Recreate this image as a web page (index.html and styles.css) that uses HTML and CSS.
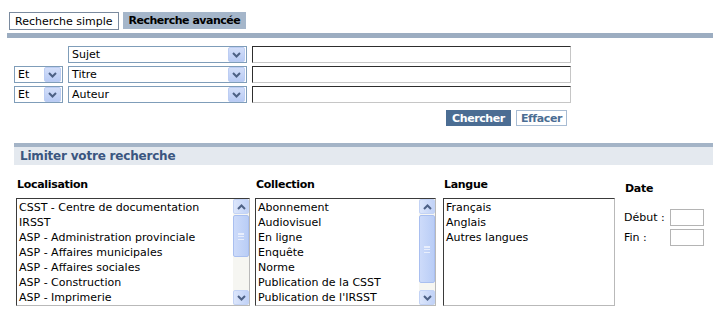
FILE: index.html
```html
<!DOCTYPE html>
<html lang="fr">
<head>
    <meta charset="UTF-8">
    <title>Recherche avancée</title>
    <link rel="stylesheet" href="styles.css">
</head>
<body>
    <div class="tabs">
        <span class="tab">Recherche simple</span>
        <span class="tab active">Recherche avancée</span>
    </div>
    <div class="bar"></div>

    <div class="criteria">
        <div></div>
        <div class="select wide"><span>Sujet</span><i class="arrow"><svg width="9" height="6" viewBox="0 0 9 6"><path d="M1 1 L4.5 4.5 L8 1" fill="none" stroke="#4d6185" stroke-width="2"/></svg></i></div>
        <div class="text-input"></div>

        <div class="select"><span>Et</span><i class="arrow"><svg width="9" height="6" viewBox="0 0 9 6"><path d="M1 1 L4.5 4.5 L8 1" fill="none" stroke="#4d6185" stroke-width="2"/></svg></i></div>
        <div class="select wide"><span>Titre</span><i class="arrow"><svg width="9" height="6" viewBox="0 0 9 6"><path d="M1 1 L4.5 4.5 L8 1" fill="none" stroke="#4d6185" stroke-width="2"/></svg></i></div>
        <div class="text-input"></div>

        <div class="select"><span>Et</span><i class="arrow"><svg width="9" height="6" viewBox="0 0 9 6"><path d="M1 1 L4.5 4.5 L8 1" fill="none" stroke="#4d6185" stroke-width="2"/></svg></i></div>
        <div class="select wide"><span>Auteur</span><i class="arrow"><svg width="9" height="6" viewBox="0 0 9 6"><path d="M1 1 L4.5 4.5 L8 1" fill="none" stroke="#4d6185" stroke-width="2"/></svg></i></div>
        <div class="text-input"></div>
    </div>

    <div class="actions">
        <span class="btn primary">Chercher</span>
        <span class="btn">Effacer</span>
    </div>

    <div class="limit">Limiter votre recherche</div>

    <div class="filters">
        <div class="col col-loc">
            <div class="label">Localisation</div>
            <div class="listbox">
                <ul>
                    <li>CSST - Centre de documentation</li>
                    <li>IRSST</li>
                    <li>ASP - Administration provinciale</li>
                    <li>ASP - Affaires municipales</li>
                    <li>ASP - Affaires sociales</li>
                    <li>ASP - Construction</li>
                    <li>ASP - Imprimerie</li>
                </ul>
                <div class="scroll">
                    <i class="sbtn"><svg width="9" height="6" viewBox="0 0 9 6"><path d="M1 5 L4.5 1.5 L8 5" fill="none" stroke="#4d6185" stroke-width="2"/></svg></i>
                    <div class="track"><div class="thumb short"><b></b></div></div>
                    <i class="sbtn"><svg width="9" height="6" viewBox="0 0 9 6"><path d="M1 1 L4.5 4.5 L8 1" fill="none" stroke="#4d6185" stroke-width="2"/></svg></i>
                </div>
            </div>
        </div>
        <div class="col col-coll">
            <div class="label">Collection</div>
            <div class="listbox">
                <ul>
                    <li>Abonnement</li>
                    <li>Audiovisuel</li>
                    <li>En ligne</li>
                    <li>Enquête</li>
                    <li>Norme</li>
                    <li>Publication de la CSST</li>
                    <li>Publication de l'IRSST</li>
                </ul>
                <div class="scroll">
                    <i class="sbtn"><svg width="9" height="6" viewBox="0 0 9 6"><path d="M1 5 L4.5 1.5 L8 5" fill="none" stroke="#4d6185" stroke-width="2"/></svg></i>
                    <div class="track"><div class="thumb long"><b></b></div></div>
                    <i class="sbtn"><svg width="9" height="6" viewBox="0 0 9 6"><path d="M1 1 L4.5 4.5 L8 1" fill="none" stroke="#4d6185" stroke-width="2"/></svg></i>
                </div>
            </div>
        </div>
        <div class="col col-lang">
            <div class="label">Langue</div>
            <div class="listbox">
                <ul>
                    <li>Français</li>
                    <li>Anglais</li>
                    <li>Autres langues</li>
                </ul>
            </div>
        </div>
        <div class="col col-date">
            <div class="label">Date</div>
            <div class="date-row"><span>Début :</span><div class="date-input"></div></div>
            <div class="date-row"><span>Fin :</span><div class="date-input"></div></div>
        </div>
    </div>
</body>
</html>
```

FILE: styles.css
```css
body {
    font-family: "DejaVu Sans", Verdana, sans-serif;
    font-size: 11px;
    margin: 0;
    padding: 0;
    background-color: #fff;
    color: #000;
}
.tabs {
    display: flex;
    gap: 4px;
    padding: 12px 0 0 9px;
    height: 18px;
}
.tab {
    display: flex;
    align-items: center;
    padding: 0 5px;
    height: 16px;
    border: 1px solid #7a8a9e;
}
.tab.active {
    font-weight: bold;
    letter-spacing: -0.5px;
    background-color: #a5b6ca;
    border-color: #a5b6ca;
    height: 15px;
}
.bar {
    height: 5px;
    margin: 3px 0 0 7px;
    background-color: #9cadc1;
}
.criteria {
    display: grid;
    grid-template-columns: 49px 179px 319px;
    grid-auto-rows: 17px;
    column-gap: 5px;
    row-gap: 3px;
    margin: 8px 0 0 14px;
}
.select {
    display: flex;
    align-items: center;
    justify-content: space-between;
    border: 1px solid #7f9db9;
    background: #fff;
    padding-left: 3px;
}
.arrow {
    display: flex;
    align-items: center;
    justify-content: center;
    width: 15px;
    height: 13px;
    margin: 1px;
    background: linear-gradient(#d3def9, #b8cbf4);
    border: 1px solid #bccdf3;
    border-radius: 2px;
}
.text-input {
    border-top: 1px solid #2e2e2e;
    border-left: 1px solid #2e2e2e;
    border-right: 1px solid #c6c6c6;
    border-bottom: 1px solid #c6c6c6;
}
.actions {
    display: flex;
    justify-content: flex-end;
    gap: 5px;
    width: 567px;
    margin-top: 7px;
}
.btn {
    display: flex;
    align-items: center;
    padding: 0 4px;
    height: 14px;
    font-weight: bold;
    letter-spacing: -0.4px;
    color: #4b6d93;
    border: 1px solid #a8bcd3;
    background: #fff;
}
.btn.primary {
    color: #fff;
    background-color: #4b6d93;
    border-color: #4b6d93;
    padding: 0 5px;
}
.limit {
    margin: 17px 0 0 14px;
    border-top: 4px solid #a4b4c7;
    background-color: #e4e9ef;
    height: 18px;
    line-height: 18px;
    padding-left: 6px;
    font-size: 12px;
    letter-spacing: -0.2px;
    font-weight: bold;
    color: #3b5680;
}
.filters {
    display: flex;
    margin: 13px 0 0 16px;
}
.col {
    display: flex;
    flex-direction: column;
}
.col-loc { width: 234px; margin-right: 5px; }
.col-coll { width: 181px; margin-right: 7px; }
.col-lang { width: 172px; margin-right: 9px; }
.label {
    font-weight: bold;
    letter-spacing: -0.3px;
    height: 20px;
    padding-left: 1px;
}
.col-date .label {
    padding-top: 4px;
    height: 24px;
}
.listbox {
    display: flex;
    height: 106px;
    border-top: 1px solid #3a3a3a;
    border-left: 1px solid #3a3a3a;
    border-right: 1px solid #b9b9b9;
    border-bottom: 1px solid #b9b9b9;
}
.listbox ul {
    flex: 1;
    list-style: none;
    margin: 0;
    padding: 1px 0 0 2px;
    line-height: 15px;
    overflow: hidden;
    white-space: nowrap;
}
.scroll {
    width: 16px;
    display: flex;
    flex-direction: column;
    background-color: #f6f6f2;
}
.sbtn {
    display: flex;
    align-items: center;
    justify-content: center;
    height: 15px;
    background: linear-gradient(90deg, #dce6fb, #c1d2f7);
    border: 1px solid #c3d3f5;
    border-radius: 2px;
    box-sizing: border-box;
}
.track {
    flex: 1;
    padding: 1px 0;
}
.thumb {
    display: flex;
    align-items: center;
    justify-content: center;
    background: linear-gradient(90deg, #cddbfa, #b9cdf6);
    border: 1px solid #a9bff0;
    border-radius: 2px;
}
.thumb b {
    width: 6px;
    height: 5px;
    border-top: 1px solid #e8eefc;
    border-bottom: 1px solid #e8eefc;
    background: linear-gradient(#e8eefc 0 1px, transparent 1px 2px, #e8eefc 2px 3px, transparent 3px);
}
.thumb.short { height: 40px; }
.thumb.long { height: 66px; }
.date-row {
    display: flex;
    align-items: center;
    justify-content: space-between;
    width: 80px;
    height: 17px;
    margin-top: 3px;
}
.date-row:first-of-type { margin-top: 0; }
.date-input {
    width: 32px;
    height: 15px;
    border: 1px solid #b4b4b4;
}
```
